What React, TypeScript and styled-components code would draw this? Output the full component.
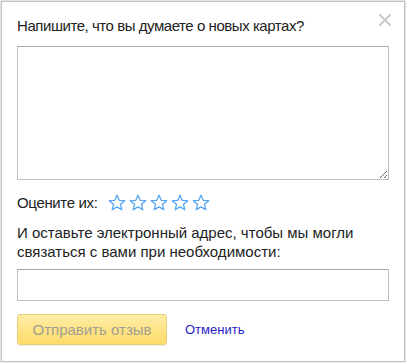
import React from "react";
import styled, { createGlobalStyle } from "styled-components";

const Global = createGlobalStyle`
  html, body { margin: 0; padding: 0; background: #eef0ee; }
  body { font-family: Arial, "Liberation Sans", sans-serif; }
`;

const Dialog = styled.div`
  box-sizing: border-box;
  margin: 1px 0 0 1px;
  width: 404px;
  height: 361px;
  background: #fff;
  border: 1px solid #c2c2c2;
  box-shadow: 0 0 2px rgba(0,0,0,0.15);
  padding: 14px 15px 0 15px;
  position: relative;
  display: flex;
  flex-direction: column;
  color: #222;
  font-size: 15px;
`;

const Close = styled.button`
  position: absolute;
  top: 9px;
  right: 10px;
  width: 18px;
  height: 18px;
  padding: 0;
  border: 0;
  background: none;
  cursor: pointer;
`;

const Title = styled.div`
  line-height: 20px;
  margin-bottom: 10px;
  letter-spacing: -0.45px;
`;

const TextArea = styled.textarea`
  box-sizing: border-box;
  width: 372px;
  height: 134px;
  border: 1px solid #bdbdbd;
  border-top-color: #a8a8a8;
  resize: vertical;
  margin: 0;
  font: inherit;
  display: block;
`;

const RateRow = styled.div`
  display: flex;
  align-items: center;
  margin-top: 13px;
  line-height: 20px;
`;

const RateLabel = styled.span`
  margin-right: 10px;
  letter-spacing: -0.35px;
`;

const Stars = styled.div`
  display: flex;
  gap: 3px;
`;

const Text = styled.div`
  margin-top: 10px;
  line-height: 19px;
`;

const Input = styled.input`
  box-sizing: border-box;
  width: 372px;
  height: 32px;
  margin-top: 8px;
  border: 1px solid #bdbdbd;
  border-top-color: #a8a8a8;
  font: inherit;
  padding: 0 6px;
`;

const Actions = styled.div`
  display: flex;
  align-items: center;
  margin-top: 13px;
  gap: 18px;
`;

const Submit = styled.button`
  box-sizing: border-box;
  width: 150px;
  height: 31px;
  border: 1px solid #e8cf78;
  border-radius: 3px;
  background: linear-gradient(#ffeca6, #ffdc68);
  color: #a09d92;
  font: inherit;
  font-size: 15px;
  padding: 0;
  box-shadow: 0 1px 1px rgba(0,0,0,0.08);
`;

const Cancel = styled.a`
  color: #1f22c4;
  font-size: 13px;
  text-decoration: none;
  cursor: pointer;
`;

const Star = () => (
  <svg width="18" height="18" viewBox="0 0 18 18">
    <path
      d="M9 1.2 L11.2 6.3 L16.7 6.7 L12.5 10.3 L13.8 15.8 L9 12.9 L4.2 15.8 L5.5 10.3 L1.3 6.7 L6.8 6.3 Z"
      fill="none"
      stroke="#55a6f2"
      strokeWidth="1.3"
      strokeLinejoin="round"
    />
  </svg>
);

export default function App() {
  return (
    <>
      <Global />
      <Dialog>
        <Close aria-label="close">
          <svg width="18" height="18" viewBox="0 0 18 18">
            <path d="M3.5 3.5 L14.5 14.5 M14.5 3.5 L3.5 14.5" stroke="#c8c8c8" strokeWidth="1.8" />
          </svg>
        </Close>
        <Title>Напишите, что вы думаете о новых картах?</Title>
        <TextArea />
        <RateRow>
          <RateLabel>Оцените их:</RateLabel>
          <Stars>
            {[0, 1, 2, 3, 4].map((i) => (
              <Star key={i} />
            ))}
          </Stars>
        </RateRow>
        <Text>
          И оставьте электронный адрес, чтобы мы могли
          <br />
          связаться с вами при необходимости:
        </Text>
        <Input />
        <Actions>
          <Submit disabled>Отправить отзыв</Submit>
          <Cancel>Отменить</Cancel>
        </Actions>
      </Dialog>
    </>
  );
}
